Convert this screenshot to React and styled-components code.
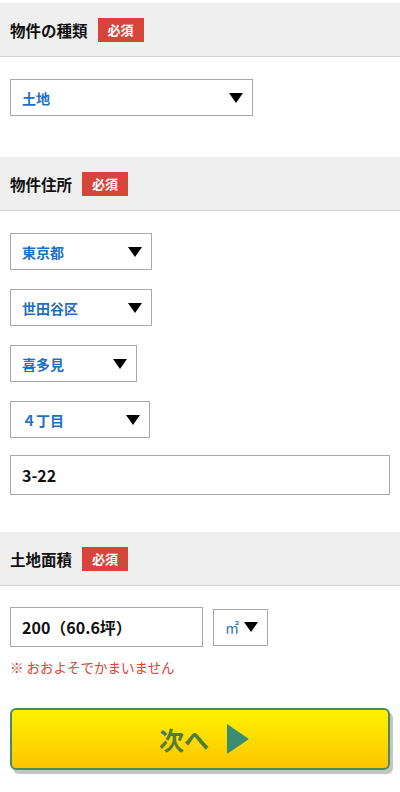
import React from "react";
import styled, { createGlobalStyle } from "styled-components";

const GlobalStyle = createGlobalStyle`
  body {
    margin: 0;
    background: #fff;
    font-family: "Noto Sans CJK JP", "Noto Sans", sans-serif;
  }
`;

const Page = styled.div`
  width: 400px;
  padding-top: 3px;
  padding-bottom: 20px;
`;

const Header = styled.div`
  height: 53px;
  background: #efefef;
  border-bottom: 1px solid #d2d2d2;
  display: flex;
  align-items: center;
  gap: 10px;
  padding: 0 10px;
`;

const Title = styled.h2`
  margin: 0;
  font-size: 15.5px;
  font-weight: 700;
  color: #111;
`;

const Badge = styled.span`
  display: inline-flex;
  align-items: center;
  justify-content: center;
  width: 46px;
  height: 24px;
  background: #d6453a;
  color: #fff;
  font-size: 13px;
  font-weight: 700;
`;

const Body = styled.div`
  display: flex;
  flex-direction: column;
  align-items: flex-start;
  gap: ${(p) => p.$gap || 19}px;
  padding: ${(p) => p.$top}px 10px ${(p) => p.$bottom}px;
`;

const Select = styled.div`
  box-sizing: border-box;
  width: ${(p) => p.$w}px;
  height: 37px;
  border: 1px solid #a9a9a9;
  background: #fff;
  display: flex;
  align-items: center;
  justify-content: space-between;
  padding: 0 9px 0 11px;
  color: #1f6fc4;
  font-size: 14px;
  font-weight: ${(p) => (p.$thin ? 400 : 700)};
`;

const Arrow = styled.span`
  width: 0;
  height: 0;
  border-left: 7px solid transparent;
  border-right: 7px solid transparent;
  border-top: 10px solid #000;
`;

const Field = styled.div`
  box-sizing: border-box;
  width: ${(p) => p.$w}px;
  height: 40px;
  border: 1px solid #a9a9a9;
  display: flex;
  align-items: center;
  padding: 0 11px;
  color: #111;
  font-size: 16px;
  font-weight: 700;
`;

const Row = styled.div`
  display: flex;
  align-items: center;
  gap: 10px;
`;

const Note = styled.p`
  margin: -6px 0 0;
  color: #d6453a;
  font-size: 13.5px;
`;

const NextButton = styled.button`
  box-sizing: border-box;
  margin: 31px 10px 0;
  width: 380px;
  height: 62px;
  border: 2px solid #4b8a5e;
  border-radius: 6px;
  background: linear-gradient(#fff200, #ffc400);
  box-shadow: 3px 4px 0 #c4c4c4;
  display: flex;
  align-items: center;
  justify-content: center;
  gap: 18px;
  color: #4f7d3c;
  font-family: "Noto Sans CJK JP", sans-serif;
  font-size: 25px;
  font-weight: 700;
  padding: 0 0 0 8px;
`;

const Play = styled.span`
  width: 0;
  height: 0;
  border-top: 15px solid transparent;
  border-bottom: 15px solid transparent;
  border-left: 22px solid #3a8c72;
`;

function Section({ title, children }) {
  return (
    <>
      <Header>
        <Title>{title}</Title>
        <Badge>必須</Badge>
      </Header>
      {children}
    </>
  );
}

export default function App() {
  return (
    <Page>
      <GlobalStyle />
      <Section title="物件の種類">
        <Body $top={22} $bottom={41}>
          <Select $w={243}>
            土地
            <Arrow />
          </Select>
        </Body>
      </Section>
      <Section title="物件住所">
        <Body $top={22} $bottom={37}>
          <Select $w={142}>東京都<Arrow /></Select>
          <Select $w={142}>世田谷区<Arrow /></Select>
          <Select $w={127}>喜多見<Arrow /></Select>
          <Select $w={140}>４丁目<Arrow /></Select>
          <Field $w={380} style={{ marginTop: -2 }}>3-22</Field>
        </Body>
      </Section>
      <Section title="土地面積">
        <Body $top={21} $bottom={0} $gap={16}>
          <Row>
            <Field $w={193}>200（60.6坪）</Field>
            <Select $w={55} $thin>㎡<Arrow /></Select>
          </Row>
          <Note>※ おおよそでかまいません</Note>
        </Body>
      </Section>
      <NextButton>
        次へ
        <Play />
      </NextButton>
    </Page>
  );
}
